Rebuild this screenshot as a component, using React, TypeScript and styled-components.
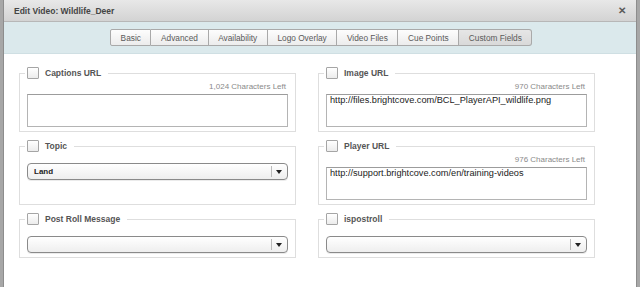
import styled, { createGlobalStyle, css } from "styled-components";

const GlobalStyle = createGlobalStyle`
  html, body {
    margin: 0;
    padding: 0;
    background: #a7a7a7;
    font-family: 'Liberation Sans', Arial, sans-serif;
  }
`

const Page = styled.div`
  width: 640px;
  height: 287px;
  overflow: hidden;
  padding: 0 3px 0 3px;
  box-sizing: border-box;
`

const Dialog = styled.div`
  height: 100%;
  background: #fff;
  border-left: 1px solid #8d8d8d;
  border-right: 1px solid #8d8d8d;
  display: flex;
  flex-direction: column;
`

const TitleBar = styled.div`
  height: 22px;
  box-sizing: border-box;
  display: flex;
  align-items: center;
  justify-content: space-between;
  padding: 0 10px 0 10px;
  background: linear-gradient(#e8e8e8, #d3d3d3);
  border-bottom: 1px solid #b7b7b7;
`

const Title = styled.span`
  font-size: 8.5px;
  font-weight: bold;
  color: #444;
`

const Close = styled.span`
  font-size: 10px;
  font-weight: bold;
  color: #5a5a5a;
  line-height: 1;
`

const TabBar = styled.div`
  height: 32px;
  box-sizing: border-box;
  background: #dbe9ec;
  border-bottom: 1px solid #cfdfe3;
  display: flex;
  padding: 7px 0 0 106px;
`

const Tab = styled.div<{ $active?: boolean }>`
  height: 17px;
  box-sizing: border-box;
  display: flex;
  align-items: center;
  padding: 0 9.6px;
  font-size: 8.3px;
  color: #5a5a5a;
  background: linear-gradient(#fdfdfd, #ececec);
  border: 1px solid #a9a9a9;
  border-left: none;
  &:first-child {
    border-left: 1px solid #a9a9a9;
    border-radius: 2px 0 0 2px;
  }
  ${({ $active }) => $active && css`
    background: linear-gradient(#e6e6e6, #d9d9d9);
    border-radius: 0 3px 3px 0;
  `}
`

const Body = styled.div`
  flex: 1;
  display: grid;
  grid-template-columns: 277px 277px;
  column-gap: 22px;
  row-gap: 8px;
  align-content: start;
  padding: 13px 0 0 15px;
`

const Field = styled.fieldset`
  margin: 0;
  padding: 0 7px 4px 5px;
  border: 1px solid #dedede;
  min-width: 0;
  display: flex;
  flex-direction: column;
`

const Legend = styled.legend`
  display: flex;
  align-items: center;
  gap: 6px;
  padding: 0 7px 0 2px;
  font-size: 8.5px;
  font-weight: bold;
  color: #555;
  height: 12px;
`

const Check = styled.span`
  width: 10px;
  height: 10px;
  border: 1px solid #a5a5a5;
  border-radius: 1px;
  background: linear-gradient(#fff, #ececec);
`

const Inner = styled.div`
  padding-left: 2px;
  display: flex;
  flex-direction: column;
`

const Counter = styled.div`
  font-size: 8px;
  color: #8a8a8a;
  text-align: right;
  height: 9px;
  line-height: 9px;
  margin: 3px 0 3px;
  padding-right: 2px;
`

const Area = styled.div`
  height: 33px;
  box-sizing: border-box;
  border: 1px solid #b4b4b4;
  border-top-color: #9c9c9c;
  padding: 0 3px;
  font-size: 9.2px;
  line-height: 11px;
  color: #222;
  white-space: nowrap;
  overflow: hidden;
`

const Select = styled.div`
  margin-top: 11px;
  height: 17px;
  box-sizing: border-box;
  border: 1px solid #8a8a8a;
  border-radius: 4px;
  background: linear-gradient(#ffffff, #eeeeee);
  display: flex;
  align-items: center;
  box-shadow: 0 1px 0 rgba(0, 0, 0, 0.08);
`

const SelectValue = styled.span`
  flex: 1;
  padding-left: 6px;
  font-size: 8px;
  font-weight: bold;
  color: #222;
`

const SelectArrow = styled.span`
  width: 14px;
  height: 11px;
  border-left: 1px solid #bbb;
  display: flex;
  align-items: center;
  justify-content: center;
  margin-right: 1px;
  &::after {
    content: '';
    border-left: 3px solid transparent;
    border-right: 3px solid transparent;
    border-top: 4px solid #222;
  }
`

const tabs = ['Basic', 'Advanced', 'Availability', 'Logo Overlay', 'Video Files', 'Cue Points', 'Custom Fields']

type FieldDef =
  | { label: string; kind: 'text'; left: string; value: string }
  | { label: string; kind: 'select'; value: string }

const fields: FieldDef[] = [
  { label: 'Captions URL', kind: 'text', left: '1,024 Characters Left', value: '' },
  { label: 'Image URL', kind: 'text', left: '970 Characters Left', value: 'http://files.brightcove.com/BCL_PlayerAPI_wildlife.png' },
  { label: 'Topic', kind: 'select', value: 'Land' },
  { label: 'Player URL', kind: 'text', left: '976 Characters Left', value: 'http://support.brightcove.com/en/training-videos' },
  { label: 'Post Roll Message', kind: 'select', value: '' },
  { label: 'ispostroll', kind: 'select', value: '' },
]

export default function App() {
  return (
    <Page>
      <GlobalStyle />
      <Dialog>
        <TitleBar>
          <Title>Edit Video: Wildlife_Deer</Title>
          <Close>✕</Close>
        </TitleBar>
        <TabBar>
          {tabs.map((t) => (
            <Tab key={t} $active={t === 'Custom Fields'}>{t}</Tab>
          ))}
        </TabBar>
        <Body>
          {fields.map((f) => (
            <Field key={f.label}>
              <Legend>
                <Check />
                {f.label}
              </Legend>
              <Inner>
                {f.kind === 'text' ? (
                  <>
                    <Counter>{f.left}</Counter>
                    <Area>{f.value}</Area>
                  </>
                ) : (
                  <Select>
                    <SelectValue>{f.value}</SelectValue>
                    <SelectArrow />
                  </Select>
                )}
              </Inner>
            </Field>
          ))}
        </Body>
      </Dialog>
    </Page>
  )
}
